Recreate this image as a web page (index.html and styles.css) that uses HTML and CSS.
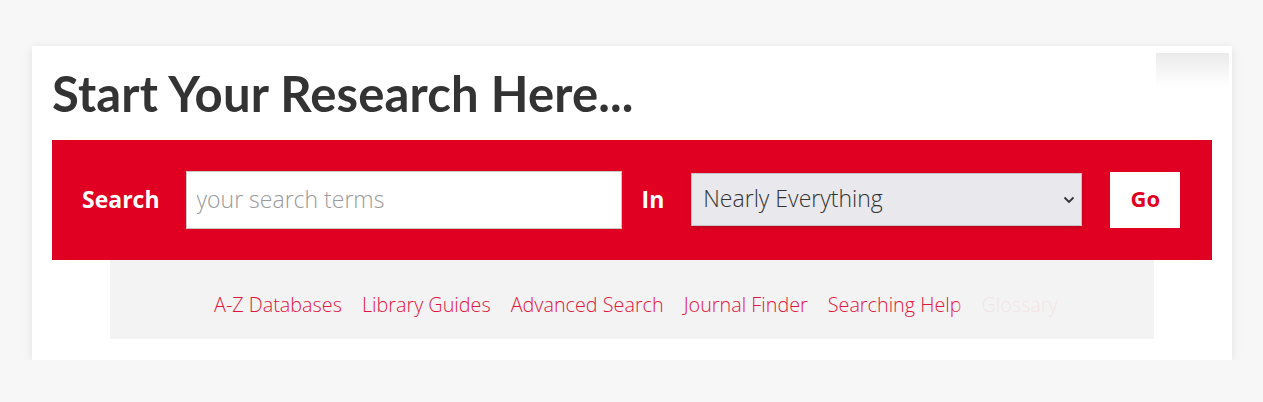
FILE: index.html
```html
<!DOCTYPE html>
<html lang="en">
<head>
<meta charset="utf-8">
<title>Start Your Research Here</title>
<link rel="stylesheet" href="styles.css">
</head>
<body>
<div class="card">
  <div class="ghost-box"></div>
  <h1 class="title">Start Your Research Here...</h1>
  <form class="search-bar" onsubmit="return false">
    <label class="label label-search" for="q">Search</label>
    <input class="input" id="q" type="text" placeholder="your search terms">
    <label class="label label-in" for="scope">In</label>
    <div class="select-wrap">
      <select class="select" id="scope">
        <option>Nearly Everything</option>
      </select>
      <svg class="chev" width="12" height="8" viewBox="0 0 12 8"><path d="M1.5 1.5 L6 6 L10.5 1.5" fill="none" stroke="#333" stroke-width="1.8"/></svg>
    </div>
    <button class="go" type="submit">Go</button>
  </form>
  <div class="links">
    <a href="#">A-Z Databases</a>
    <a href="#">Library Guides</a>
    <a href="#">Advanced Search</a>
    <a href="#">Journal Finder</a>
    <a href="#">Searching Help</a>
    <a href="#">Glossary</a>
    <div class="fade"></div>
  </div>
</div>
</body>
</html>
```
FILE: styles.css
```css
* { box-sizing: border-box; }
html, body { margin: 0; padding: 0; }
body {
  background: #f7f7f7;
  padding: 46px 31px 0 32px;
  font-family: "Open Sans", "Liberation Sans", sans-serif;
}
.card {
  position: relative;
  width: 1200px;
  height: 314px;
  background: #fff;
  box-shadow: 0 2px 10px rgba(0,0,0,0.09);
  padding: 0 20px;
}
.ghost-box {
  position: absolute;
  right: 3px;
  top: 7px;
  width: 73px;
  height: 34px;
  background: linear-gradient(#ebebeb, #ffffff);
}
.title {
  margin: 0;
  height: 94px;
  padding-top: 19px;
  font-family: "Lato", "Liberation Sans", sans-serif;
  font-weight: 700;
  font-size: 49px;
  line-height: 56px;
  color: #333;
  letter-spacing: 0.15px;
}
.search-bar {
  margin: 0;
  height: 120px;
  background: #e00022;
  display: flex;
  align-items: center;
  padding-left: 30px;
}
.label {
  color: #fff;
  font-weight: 700;
  font-size: 23px;
  line-height: 28px;
  margin-top: -3px;
}
.label-search { margin-right: 26px; }
.label-in { margin: -3px 27px 0 20px; }
.input {
  width: 436px;
  height: 58px;
  border: 1px solid #c9c9c9;
  background: #fff;
  padding: 0 10px 3px;
  font-family: "Open Sans", sans-serif;
  font-weight: 300;
  font-size: 23px;
  color: #333;
  outline: none;
}
.input::placeholder { color: #9a9a9a; }
.select-wrap {
  position: relative;
  width: 391px;
  height: 53px;
  margin-right: 28px;
  margin-top: -1px;
}
.select {
  appearance: none;
  -webkit-appearance: none;
  width: 100%;
  height: 100%;
  border: 1px solid #c4c4c8;
  border-radius: 0;
  background: #e9e8ec;
  padding: 0 11px 3px;
  font-family: "Open Sans", sans-serif;
  font-weight: 300;
  font-size: 23px;
  color: #333;
  box-shadow: 0 2px 4px rgba(0,0,0,0.15);
}
.chev {
  position: absolute;
  right: 7px;
  top: 23px;
  pointer-events: none;
}
.go {
  width: 70px;
  height: 56px;
  border: 0;
  background: #fff;
  color: #e00022;
  font-family: "Open Sans", sans-serif;
  font-weight: 700;
  font-size: 22px;
  padding: 0 0 4px;
}
.links {
  position: relative;
  margin: 0 58px;
  height: 79px;
  background: #f3f3f3;
  display: flex;
  justify-content: flex-start;
  align-items: center;
  gap: 20px;
  padding: 10px 0 0 104px;
}
.links a {
  color: #e2153d;
  text-decoration: none;
  font-size: 19.8px;
  font-weight: 300;
}
.fade {
  position: absolute;
  left: 846px;
  top: 0;
  width: 110px;
  height: 100%;
  background: linear-gradient(90deg, rgba(243,243,243,0) 0px, rgba(243,243,243,0.92) 10px, rgba(243,243,243,0.92) 100%);
}
```
